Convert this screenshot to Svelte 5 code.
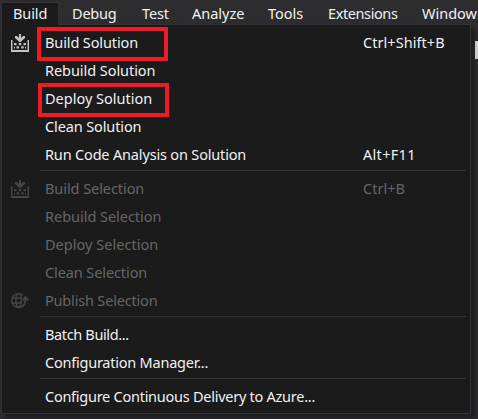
<script>
  const tabs = [
    { label: 'Build', x: 11, s: -0.1, active: true },
    { label: 'Debug', x: 71, s: -0.2 },
    { label: 'Test', x: 141, s: -0.1 },
    { label: 'Analyze', x: 191, s: 0 },
    { label: 'Tools', x: 267, s: 0 },
    { label: 'Extensions', x: 327, s: -0.4 },
    { label: 'Window', x: 421, s: 0 }
  ];
  const groups = [
    [
      { label: 'Build Solution', key: 'Ctrl+Shift+B', ks: 0.05, icon: 'build', marked: 'first', s: -0.12 },
      { label: 'Rebuild Solution', s: -0.06 },
      { label: 'Deploy Solution', marked: 'second', s: 0 },
      { label: 'Clean Solution', s: -0.12 },
      { label: 'Run Code Analysis on Solution', key: 'Alt+F11', ks: 0.3, s: -0.17 }
    ],
    [
      { label: 'Build Selection', key: 'Ctrl+B', icon: 'build', off: true, s: -0.07 },
      { label: 'Rebuild Selection', off: true, s: -0.03 },
      { label: 'Deploy Selection', off: true, s: 0.03 },
      { label: 'Clean Selection', off: true, s: -0.1 },
      { label: 'Publish Selection', icon: 'publish', off: true, s: -0.18 }
    ],
    [
      { label: 'Batch Build...', s: -0.36 },
      { label: 'Configuration Manager...', s: -0.23 }
    ],
    [{ label: 'Configure Continuous Delivery to Azure...', s: -0.26 }]
  ];
</script>

<div class="window">
  <nav class="bar">
    {#each tabs as tab, i}
      <div class="tab" class:active={tab.active} style:width="{(tabs[i + 1]?.x ?? 478) - tab.x}px">
        <span style:letter-spacing="{tab.s}px">{tab.label}</span>
      </div>
    {/each}
  </nav>
  <div class="menu">
    {#each groups as group, g}
      {#if g > 0}<div class="sep"></div>{/if}
      {#each group as item}
        <div class="row" class:off={item.off}>
          <div class="gutter">
            {#if item.icon === 'build'}
              <svg width="18" height="18" viewBox="0 0 18 18" fill="currentColor">
                <path d="M0 6h1.500v10h15V6H18v12H0z" />
                <path d="M8 0h2v4L12 2h2v2L9 8.500 4 4V2h2l2 2z" />
                <path d="M3 9h2.500v2.200H3zM7.800 9h2.500v2.200H7.800zM12.500 9H15v2.200h-2.500zM5.500 12.200H8v2.200H5.500zM10.200 12.200h2.500v2.200h-2.500zM3 13h1v1.500H3zM14 13h1v1.500h-1z" />
              </svg>
            {:else if item.icon === 'publish'}
              <svg width="18" height="18" viewBox="0 0 18 18" fill="none" stroke="currentColor" stroke-width="1.4">
                <path d="M12 3A7 7 0 1 0 12 14M1.500 6H11M1.500 11H11M6 2C4.500 6 4.500 11 6.500 15M9 2c1 2 1.500 4 1.500 6s-.5 5-2 7" />
                <path d="M10.500 15c3.500-1.500 4-5 4-9.500M11.500 8.500l3-3.300 3 3.300" stroke-width="1.8" />
              </svg>
            {/if}
          </div>
          <span class="label" style:letter-spacing="{item.s}px">{item.label}</span>
          {#if item.key}<span class="key" style:letter-spacing="{item.ks ?? 0}px">{item.key}</span>{/if}
          {#if item.marked}<i class="mark {item.marked}"></i>{/if}
        </div>
      {/each}
    {/each}
  </div>
  <div class="scroll"></div>
</div>

<style>
  :global(body) { background: #2d2d30; overflow: hidden; }
  .window {
    position: relative;
    box-sizing: border-box;
    width: 478px;
    height: 419px;
    overflow: hidden;
    background: #2d2d30;
    color: #f1f1f1;
    font: 14.5px/20px "Noto Sans", "Open Sans", sans-serif;
    white-space: nowrap;
  }
  .bar { display: flex; height: 24px; padding-left: 11px; box-sizing: border-box; }
  .tab { flex: none; box-sizing: border-box; height: 24px; padding: 3px 0 0 1px; }
  .active {
    position: relative;
    z-index: 1;
    max-width: 58px;
    margin-left: -10px;
    padding: 0 0 0 11px;
    margin-right: 12px;
    margin-top: 2px;
    height: 23px;
    border: 1px solid #333337;
    border-bottom: 0;
    background: #1b1b1c;
  }
  .menu {
    box-sizing: border-box;
    width: 470px;
    height: 390px;
    margin-left: 1px;
    padding-top: 4px;
    border: 1px solid #333337;
    background: #1b1b1c;
    box-shadow: 4px 4px 4px rgba(0, 0, 0, 0.35);
  }
  .row { position: relative; display: flex; align-items: center; height: 28px; }
  .off { color: #656565; }
  .gutter { width: 43px; flex: none; padding-left: 9px; box-sizing: border-box; height: 18px; color: #c2c2c2; }
  .off .gutter { color: #454547; }
  .gutter svg { display: block; }
  .label { width: 318px; flex: none; }
  .label, .key { padding-bottom: 2px; }
  .sep { height: 1px; margin: 1px 4px 4px 38px; background: #333337; }
  .mark { position: absolute; box-sizing: border-box; border: 4px solid #ed1c24; }
  .first { left: 35px; top: -2px; width: 131px; height: 34px; }
  .second { left: 36px; top: -2px; width: 131px; height: 34px; }
  .scroll { position: absolute; right: 0; top: 41px; width: 3px; height: 18px; background: #c8c8c8; }
</style>
